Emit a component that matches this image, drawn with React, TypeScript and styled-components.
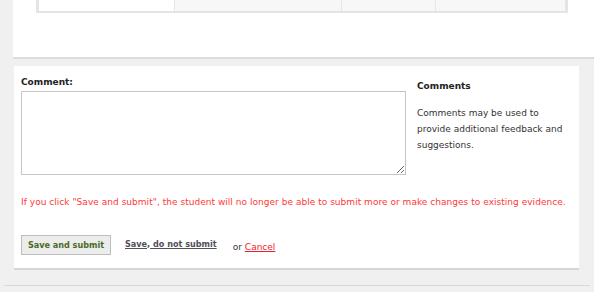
import React from 'react'
import styled, { createGlobalStyle } from 'styled-components'

const GlobalStyle = createGlobalStyle`
  html, body {
    margin: 0;
    padding: 0;
    background: #f0f0f0;
  }
  body {
    font-family: 'DejaVu Sans', Verdana, sans-serif;
    font-size: 9px;
    color: #222;
  }
`

const Page = styled.div`
  width: 594px;
  height: 292px;
  overflow: hidden;
  padding-left: 13px;
  box-sizing: border-box;
  display: flex;
  flex-direction: column;
`

const TopPanel = styled.div`
  background: #fff;
  height: 57px;
  border-bottom: 2px solid #dcdcdc;
  padding-left: 23px;
  padding-right: 26px;
  flex-shrink: 0;
`

const Table = styled.div`
  display: grid;
  grid-template-columns: 135px 166px 93px 1fr;
  border: 3px solid #e4e4e4;
  border-top: none;
  border-bottom-width: 2px;
  background: #e6e6e6;
  column-gap: 1px;
`

const Cell = styled.div<{ shaded?: boolean }>`
  height: 11px;
  background: ${({ shaded }) => (shaded ? '#f7f7f7' : '#fff')};
`

const Gap = styled.div`
  height: 7px;
  flex-shrink: 0;
`

const CommentPanel = styled.div`
  margin-left: 1px;
  width: 565px;
  height: 204px;
  box-sizing: border-box;
  background: #fff;
  border-bottom: 2px solid #d6d6d6;
  padding: 10px 7px 0;
  flex-shrink: 0;
`

const FormRow = styled.div`
  display: flex;
  gap: 11px;
`

const Field = styled.div`
  display: flex;
  flex-direction: column;
`

const Label = styled.label`
  font-weight: bold;
  line-height: 12px;
  margin-bottom: 3px;
`

const TextArea = styled.textarea`
  width: 385px;
  height: 84px;
  box-sizing: border-box;
  border: 1px solid #c6c6c6;
  margin: 0;
  padding: 2px;
  font-family: inherit;
`

const Help = styled.div`
  padding-top: 3px;
  width: 150px;
`

const HelpTitle = styled.div`
  font-weight: bold;
  line-height: 14px;
  margin-bottom: 12px;
`

const HelpText = styled.p`
  margin: 0;
  line-height: 16px;
  color: #333;
`

const Warning = styled.p`
  margin: 21px 0 0;
  color: #ff3838;
  line-height: 12px;
  letter-spacing: 0.03px;
`

const Actions = styled.div`
  display: flex;
  align-items: center;
  margin-top: 27px;
`

const SubmitButton = styled.button`
  height: 20px;
  width: 90px;
  padding: 0;
  background: #ececec;
  border: 1px solid #bdbdbd;
  font-family: 'DejaVu Sans Condensed', 'DejaVu Sans', sans-serif;
  font-stretch: condensed;
  font-weight: bold;
  font-size: 9px;
  color: #4b6a26;
`

const SaveLink = styled.a`
  margin-left: 14px;
  font-family: 'DejaVu Sans Condensed', 'DejaVu Sans', sans-serif;
  font-stretch: condensed;
  font-weight: bold;
  color: #50505a;
  text-decoration: underline;
  margin-top: -3px;
`

const Or = styled.span`
  margin-left: 16px;
  margin-top: 3px;
  color: #333;
`

const CancelLink = styled.a`
  margin-left: 3px;
  margin-top: 3px;
  color: #f01c2c;
  text-decoration: underline;
`

const BottomRule = styled.div`
  margin-top: 15px;
  margin-left: -9px;
  width: 586px;
  border-top: 1px solid #d9d9d9;
  flex-shrink: 0;
`

export default function App() {
  return (
    <Page>
      <GlobalStyle />
      <TopPanel>
        <Table>
          <Cell />
          <Cell shaded />
          <Cell shaded />
          <Cell shaded />
        </Table>
      </TopPanel>
      <Gap />
      <CommentPanel>
        <FormRow>
          <Field>
            <Label htmlFor="comment">Comment:</Label>
            <TextArea id="comment" />
          </Field>
          <Help>
            <HelpTitle>Comments</HelpTitle>
            <HelpText>Comments may be used to provide additional feedback and suggestions.</HelpText>
          </Help>
        </FormRow>
        <Warning>
          If you click "Save and submit", the student will no longer be able to submit more or make changes to existing evidence.
        </Warning>
        <Actions>
          <SubmitButton type="button">Save and submit</SubmitButton>
          <SaveLink href="#">Save, do not submit</SaveLink>
          <Or>or</Or>
          <CancelLink href="#">Cancel</CancelLink>
        </Actions>
      </CommentPanel>
      <BottomRule />
    </Page>
  )
}
